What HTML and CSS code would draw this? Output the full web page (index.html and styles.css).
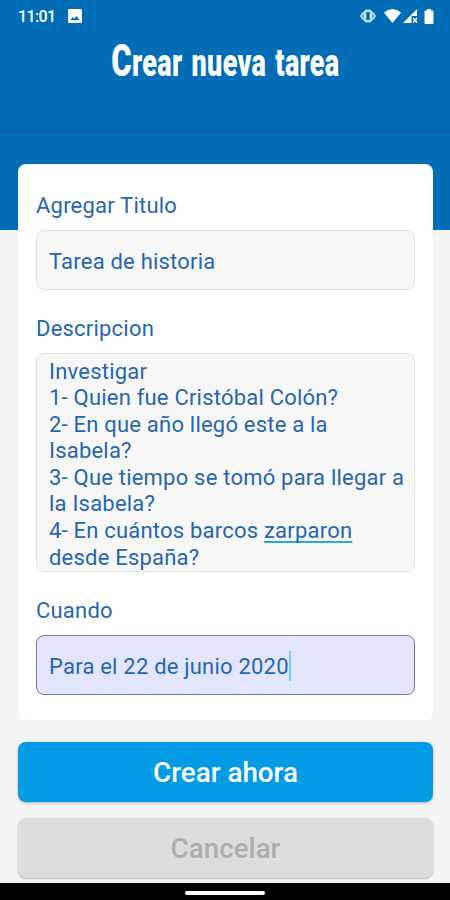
FILE: index.html
```
<!DOCTYPE html>
<html lang="es">
<head>
    <meta charset="UTF-8">
    <meta name="viewport" content="width=device-width, initial-scale=1.0">
    <title>Crear nueva tarea</title>
    <link rel="stylesheet" href="styles.css">
</head>
<body>

<header class="header">
    <!-- Barra de estado -->
    <div class="status-bar">
        <span class="time">11:01</span>
        <svg class="icon-image" width="14" height="14" viewBox="0 0 14 14">
            <path fill="#fff" fill-rule="evenodd" d="M1.500 0h11Q14 0 14 1.500v11q0 1.500-1.500 1.500h-11Q0 14 0 12.500v-11Q0 0 1.500 0zM2.500 11h9L8.500 7 6.300 9.800 4.800 8z"/>
        </svg>
        <div class="status-icons">
            <svg width="16" height="14" viewBox="0 0 16 14">
                <path fill="#c4dcf8" fill-rule="evenodd" d="M6 0.500h4q1.500 0 1.500 1.500L14 4l2 3-2 3-2.500 2q0 1.500-1.500 1.500H6q-1.500 0-1.500-1.500L2 10 0 7l2-3 2.500-2q0-1.500 1.500-1.500zM6.300 3v8h3.400V3zM2.500 5.500v3h.9v-3zM12.600 5.500v3h.9v-3z"/>
            </svg>
            <svg class="icon-wifi" width="17" height="14" viewBox="0 0 17 14">
                <path fill="#fff" d="M0 3.500Q8.500-3.500 17 3.500L8.500 14z"/>
            </svg>
            <svg class="icon-signal" width="15" height="14" viewBox="0 0 15 14">
                <path fill="#fff" d="M14 0v7H8.500v7H0z"/>
                <path fill="none" stroke="#fff" stroke-width="1.500" d="M10 9l4 4.500M14 9l-4 4.500"/>
            </svg>
            <svg class="icon-battery" width="10" height="15" viewBox="0 0 10 15">
                <path fill="#fff" d="M3 0h4v1.500h1.500q1 0 1 1V14q0 1-1 1h-7q-1 0-1-1V2.500q0-1 1-1H3z"/>
            </svg>
        </div>
    </div>
    <h1 class="title"><span class="title-text"><span class="title-initial">C</span>rear nueva tarea</span></h1>
</header>

<main class="content">
    <!-- Formulario de la tarea -->
    <section class="card">
        <div class="label">Agregar Titulo</div>
        <div class="field">Tarea de historia</div>

        <div class="label">Descripcion</div>
        <div class="field field-text">Investigar<br>
            1- Quien fue Cristóbal Colón?<br>
            2- En que año llegó este a la<br>
            Isabela?<br>
            3- Que tiempo se tomó para llegar a<br>
            la Isabela?<br>
            4- En cuántos barcos <span class="spelling">zarparon</span><br>
            desde España?</div>

        <div class="label">Cuando</div>
        <div class="field field-active">Para el 22 de junio 2020<span class="cursor"></span></div>
    </section>

    <!-- Botones -->
    <button class="btn btn-create">Crear ahora</button>
    <button class="btn btn-cancel">Cancelar</button>
</main>

<footer class="nav-bar">
    <div class="nav-handle"></div>
</footer>

</body>
</html>
```
FILE: styles.css
```
* {
    box-sizing: border-box;
}
body {
    font-family: Roboto, sans-serif;
    display: flex;
    flex-direction: column;
    height: 900px;
    margin: 0;
    background-color: #f4f4f4;
    overflow: hidden;
}
.header {
    height: 230px;
    flex-shrink: 0;
    background: linear-gradient(#064690, #064690) 0 131px / 100% 1px no-repeat #006db6;
    color: white;
}
.status-bar {
    display: flex;
    align-items: center;
    height: 32px;
    padding: 0 16px 0 18px;
}
.time {
    width: 38px;
    font-size: 16px;
    font-weight: 500;
    line-height: 32px;
    letter-spacing: -0.6px;
    padding-top: 2px;
}
.icon-image {
    margin-left: 12px;
}
.status-icons {
    display: flex;
    align-items: center;
    margin-left: auto;
}
.icon-wifi {
    margin-left: 8px;
}
.icon-signal {
    margin-left: 2px;
}
.icon-battery {
    margin-left: 6px;
}
.title {
    display: flex;
    justify-content: center;
    margin: 0;
    height: 62px;
    font-size: 39px;
    font-weight: 900;
    line-height: 62px;
    letter-spacing: 0.5px;
    word-spacing: 3px;
    white-space: nowrap;
}
.title-text {
    transform: scaleX(0.69);
}
.title-initial {
    font-size: 45px;
    line-height: 1;
}
.content {
    display: flex;
    flex-direction: column;
    margin-top: -66px;
    padding: 0 17px 0 18px;
}
.card {
    height: 556px;
    padding: 26px 18px 0;
    border-radius: 8px;
    background-color: white;
    margin-bottom: 22px;
}
.label {
    height: 32px;
    margin-bottom: 8px;
    font-size: 22px;
    line-height: 32px;
    letter-spacing: 0.21px;
    color: #2665b0;
}
.field {
    display: flex;
    align-items: center;
    height: 60px;
    margin-bottom: 23px;
    padding: 2px 12px 0;
    border: 1px solid #e3e3e3;
    border-radius: 8px;
    background-color: #f7f7f7;
    color: #2665b0;
    font-size: 22px;
    letter-spacing: 0.21px;
    white-space: nowrap;
}
.field-text {
    display: block;
    height: 219px;
    padding-top: 4.500px;
    line-height: 26.6px;
}
.field-active {
    border-color: #77779c;
    background-color: #e4e6ff;
}
.spelling {
    text-decoration: underline #28aad8 2px;
    text-decoration-skip-ink: none;
    text-underline-offset: 3px;
}
.cursor {
    width: 2px;
    height: 30px;
    background-color: #7cc8ff;
}
.btn {
    height: 60px;
    padding: 0;
    border: none;
    border-radius: 8px;
    font-family: Roboto, sans-serif;
    font-size: 27.8px;
    font-weight: 500;
    cursor: pointer;
}
.btn-create {
    margin-bottom: 16px;
    background-color: #039be5;
    color: white;
    box-shadow: 0 1px 3px rgba(0, 0, 0, 0.3);
}
.btn-cancel {
    background-color: #dcdcdc;
    color: #adadad;
    box-shadow: 0 1px 2px rgba(0, 0, 0, 0.25);
}
.nav-bar {
    display: flex;
    justify-content: center;
    align-items: center;
    height: 17px;
    margin-top: auto;
    padding-top: 2px;
    background-color: black;
}
.nav-handle {
    width: 80px;
    height: 4px;
    border-radius: 2px;
    background-color: white;
}
```
